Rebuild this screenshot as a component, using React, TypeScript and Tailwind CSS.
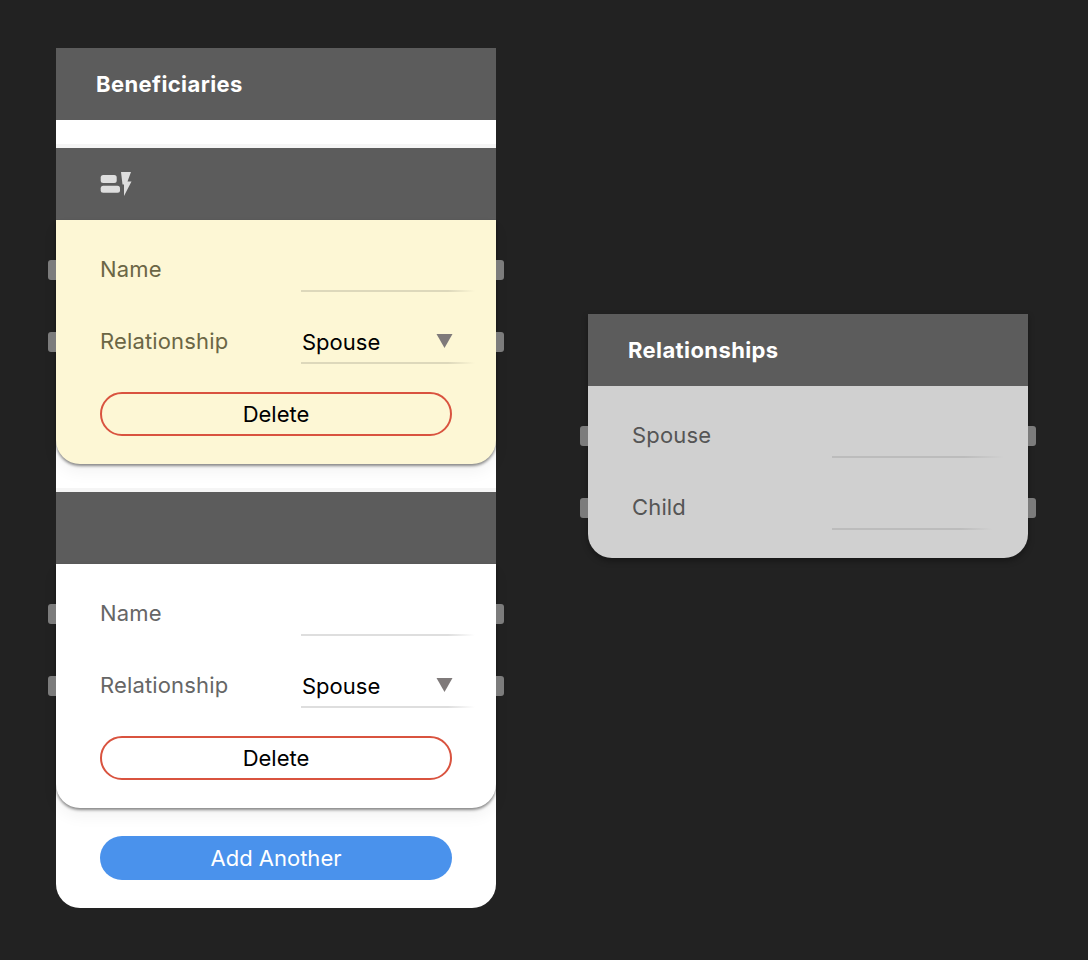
import React from "react";

const font = { fontFamily: "Inter, 'Liberation Sans', sans-serif" };

function Port({ side }: { side: "l" | "r" }) {
  return (
    <div
      className={
        "absolute top-[26px] w-2 h-5 bg-[#7c7c7c] " +
        (side === "l" ? "left-[-8px] rounded-l-[3px]" : "right-[-8px] rounded-r-[3px]")
      }
    />
  );
}

function Line({ w, fade, color }: { w: number; fade: number; color: string }) {
  return (
    <div className="flex h-0.5">
      <div style={{ width: w, background: color }} />
      <div style={{ width: fade, background: `linear-gradient(to right, ${color}, transparent)` }} />
    </div>
  );
}

function Header({ title, icon }: { title?: string; icon?: boolean }) {
  return (
    <div className="h-[72px] bg-[#5c5c5c] flex items-center pl-10 shrink-0">
      {title && <span className="text-white font-bold text-[22px] tracking-[0.4px]">{title}</span>}
      {icon && (
        <svg width="32" height="24" viewBox="0 0 32 24" className="ml-1" fill="#dedede">
          <rect x="0.7" y="3" width="16" height="8" rx="2.5" />
          <rect x="0.7" y="13.7" width="19.3" height="7" rx="2.5" />
          <path d="M21 0H31L27.5 9.5H31.5L24 24V12.5H22.5Z" />
        </svg>
      )}
    </div>
  );
}

function Row({
  label,
  labelColor,
  labelWidth,
  line,
  value,
  w = 147,
  fade = 27,
}: {
  label: string;
  labelColor: string;
  labelWidth: string;
  line: string;
  value?: string;
  w?: number;
  fade?: number;
}) {
  return (
    <div className="relative h-[72px] flex items-start px-11">
      <span
        className={"text-[22px] leading-[28px] tracking-[0.15px] pt-[21px] h-[72px] shrink-0 " + labelWidth}
        style={{ color: labelColor }}
      >
        {label}
      </span>
      <div className="flex flex-col justify-end h-[58px]">
        {value && (
          <div className="flex items-center justify-between w-[152px] pl-px h-7 mb-1.5">
            <span className="text-[22px] leading-[28px] text-black">{value}</span>
            <svg width="17" height="14" viewBox="0 0 17 14" className="-mt-0.5">
              <path d="M0.5 0H16.5L8.5 14Z" fill="#7f7a7a" />
            </svg>
          </div>
        )}
        <Line color={line} w={w} fade={fade} />
      </div>
      <Port side="l" />
      <Port side="r" />
    </div>
  );
}

function Card({ bg, line, label, icon }: { bg: string; line: string; label: string; icon?: boolean }) {
  return (
    <div>
      <Header icon={icon} />
      <div
        className="rounded-b-[24px] pt-3.5 pb-7 shadow-[0_2px_3px_rgba(0,0,0,0.45),0_8px_16px_rgba(0,0,0,0.05)]"
        style={{ background: bg }}
      >
        <Row label="Name" labelColor={label} labelWidth="w-[201px]" line={line} />
        <Row label="Relationship" labelColor={label} labelWidth="w-[201px]" line={line} value="Spouse" />
        <div className="px-11 pt-3.5">
          <button className="w-full h-11 rounded-full border-2 border-[#d9533f] text-black text-[22px] flex items-center justify-center">
            Delete
          </button>
        </div>
      </div>
    </div>
  );
}

export default function App() {
  return (
    <div className="relative w-[1088px] h-[960px] bg-[#222222] overflow-hidden" style={font}>
      <div className="absolute left-14 top-12 w-[440px] flex flex-col bg-white rounded-b-[24px]">
        <Header title="Beneficiaries" />
        <div className="h-7 border-b-4 border-[#f5f5f5]" />
        <Card bg="#fdf7d5" line="#ddd8bb" label="#6b6645" icon />
        <div className="h-7 border-b-4 border-[#f5f5f5]" />
        <Card bg="#ffffff" line="#dedede" label="#666666" />
        <div className="px-11 py-7">
          <button className="w-full h-11 rounded-full bg-[#4a92ec] text-white text-[22px] flex items-center justify-center">
            Add Another
          </button>
        </div>
      </div>

      <div className="absolute left-[588px] top-[314px] w-[440px] flex flex-col bg-[#d0d0d0] rounded-b-[24px] shadow-[0_3px_6px_rgba(0,0,0,0.35)]">
        <Header title="Relationships" />
        <div className="py-3.5">
          <Row label="Spouse" labelColor="#555555" labelWidth="w-[200px]" line="#bcbcbc" w={132} fade={40} />
          <Row label="Child" labelColor="#555555" labelWidth="w-[200px]" line="#bcbcbc" w={128} fade={32} />
        </div>
      </div>
    </div>
  );
}
